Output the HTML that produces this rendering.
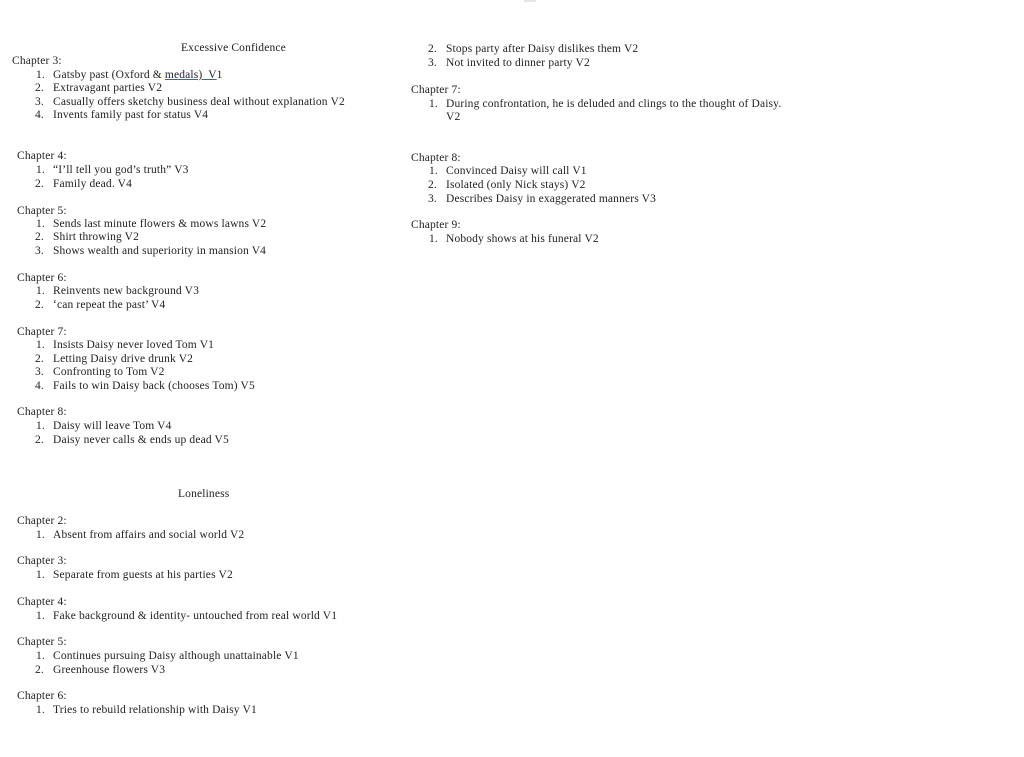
<!DOCTYPE html>
<html><head><meta charset="utf-8"><style>
html,body{margin:0;padding:0;background:#fff;}
body{width:1024px;height:757px;position:relative;overflow:hidden;font-family:"Liberation Serif",serif;font-size:11.5px;letter-spacing:0.15px;color:#222;}
div{position:absolute;white-space:nowrap;line-height:12px;margin-top:1px;}
.u{color:#223;text-decoration:underline;text-decoration-color:#3a5fc0;}
</style></head><body>
<div style="left:524px;top:-5px;width:12px;height:6px;background:#e6e6e6"></div>

<div style="left:181px;top:41px">Excessive Confidence</div>
<div style="left:12px;top:54px">Chapter 3:</div>
<div style="left:36px;top:68px">1.</div><div style="left:53px;top:68px">Gatsby past (Oxford &amp; <span class="u">medals)&nbsp; V</span>1</div>
<div style="left:35px;top:81px">2.</div><div style="left:53px;top:81px">Extravagant parties V2</div>
<div style="left:35px;top:95px">3.</div><div style="left:53px;top:95px">Casually offers sketchy business deal without explanation V2</div>
<div style="left:35px;top:108px">4.</div><div style="left:53px;top:108px">Invents family past for status V4</div>

<div style="left:17px;top:149px">Chapter 4:</div>
<div style="left:36px;top:163px">1.</div><div style="left:53px;top:163px">“I’ll tell you god’s truth” V3</div>
<div style="left:35px;top:177px">2.</div><div style="left:53px;top:177px">Family dead. V4</div>

<div style="left:17px;top:204px">Chapter 5:</div>
<div style="left:36px;top:217px">1.</div><div style="left:53px;top:217px">Sends last minute flowers &amp; mows lawns V2</div>
<div style="left:35px;top:230px">2.</div><div style="left:53px;top:230px">Shirt throwing V2</div>
<div style="left:35px;top:244px">3.</div><div style="left:53px;top:244px">Shows wealth and superiority in mansion V4</div>

<div style="left:17px;top:271px">Chapter 6:</div>
<div style="left:36px;top:284px">1.</div><div style="left:53px;top:284px">Reinvents new background V3</div>
<div style="left:35px;top:298px">2.</div><div style="left:53px;top:298px">‘can repeat the past’ V4</div>

<div style="left:17px;top:325px">Chapter 7:</div>
<div style="left:36px;top:338px">1.</div><div style="left:53px;top:338px">Insists Daisy never loved Tom V1</div>
<div style="left:35px;top:352px">2.</div><div style="left:53px;top:352px">Letting Daisy drive drunk V2</div>
<div style="left:35px;top:365px">3.</div><div style="left:53px;top:365px">Confronting to Tom V2</div>
<div style="left:35px;top:379px">4.</div><div style="left:53px;top:379px">Fails to win Daisy back (chooses Tom) V5</div>

<div style="left:17px;top:405px">Chapter 8:</div>
<div style="left:36px;top:419px">1.</div><div style="left:53px;top:419px">Daisy will leave Tom V4</div>
<div style="left:35px;top:433px">2.</div><div style="left:53px;top:433px">Daisy never calls &amp; ends up dead V5</div>

<div style="left:178px;top:487px">Loneliness</div>
<div style="left:17px;top:514px">Chapter 2:</div>
<div style="left:36px;top:528px">1.</div><div style="left:53px;top:528px">Absent from affairs and social world V2</div>
<div style="left:17px;top:554px">Chapter 3:</div>
<div style="left:36px;top:568px">1.</div><div style="left:53px;top:568px">Separate from guests at his parties V2</div>
<div style="left:17px;top:595px">Chapter 4:</div>
<div style="left:36px;top:609px">1.</div><div style="left:53px;top:609px">Fake background &amp; identity- untouched from real world V1</div>
<div style="left:17px;top:635px">Chapter 5:</div>
<div style="left:36px;top:649px">1.</div><div style="left:53px;top:649px">Continues pursuing Daisy although unattainable V1</div>
<div style="left:35px;top:663px">2.</div><div style="left:53px;top:663px">Greenhouse flowers V3</div>
<div style="left:17px;top:689px">Chapter 6:</div>
<div style="left:36px;top:703px">1.</div><div style="left:53px;top:703px">Tries to rebuild relationship with Daisy V1</div>

<div style="left:428px;top:42px">2.</div><div style="left:446px;top:42px">Stops party after Daisy dislikes them V2</div>
<div style="left:428px;top:56px">3.</div><div style="left:446px;top:56px">Not invited to dinner party V2</div>
<div style="left:411px;top:83px">Chapter 7:</div>
<div style="left:429px;top:97px">1.</div><div style="left:446px;top:97px">During confrontation, he is deluded and clings to the thought of Daisy.</div>
<div style="left:446px;top:110px">V2</div>
<div style="left:411px;top:151px">Chapter 8:</div>
<div style="left:429px;top:164px">1.</div><div style="left:446px;top:164px">Convinced Daisy will call V1</div>
<div style="left:428px;top:178px">2.</div><div style="left:446px;top:178px">Isolated (only Nick stays) V2</div>
<div style="left:428px;top:192px">3.</div><div style="left:446px;top:192px">Describes Daisy in exaggerated manners V3</div>
<div style="left:411px;top:218px">Chapter 9:</div>
<div style="left:429px;top:232px">1.</div><div style="left:446px;top:232px">Nobody shows at his funeral V2</div>
</body></html>
